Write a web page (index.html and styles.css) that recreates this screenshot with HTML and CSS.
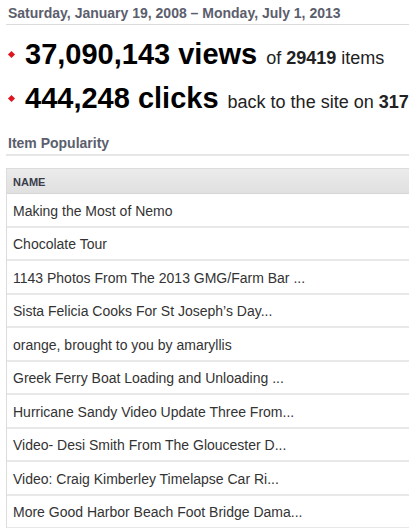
FILE: index.html
```html
<!DOCTYPE html>
<html>
<head>
<meta charset="utf-8">
<link rel="stylesheet" href="styles.css">
</head>
<body>
<div class="page">
  <div class="date">Saturday, January 19, 2008 – Monday, July 1, 2013</div>
  <div class="stats">
    <div class="stat"><span class="bullet"></span><b>37,090,143 views</b> <span class="sub">of <b>29419</b> items</span></div>
    <div class="stat"><span class="bullet"></span><b>444,248 clicks</b> <span class="sub">back to the site on <b>3176</b></span></div>
  </div>
  <div class="section-title">Item Popularity</div>
  <div class="table">
    <div class="thead">NAME</div>
    <div class="row">Making the Most of Nemo</div>
    <div class="row">Chocolate Tour</div>
    <div class="row">1143 Photos From The 2013 GMG/Farm Bar ...</div>
    <div class="row">Sista Felicia Cooks For St Joseph’s Day...</div>
    <div class="row">orange, brought to you by amaryllis</div>
    <div class="row">Greek Ferry Boat Loading and Unloading ...</div>
    <div class="row">Hurricane Sandy Video Update Three From...</div>
    <div class="row">Video- Desi Smith From The Gloucester D...</div>
    <div class="row">Video: Craig Kimberley Timelapse Car Ri...</div>
    <div class="row">More Good Harbor Beach Foot Bridge Dama...</div>
  </div>
</div>
</body>
</html>
```
FILE: styles.css
```css
html, body {
  margin: 0;
  padding: 0;
  overflow: hidden;
  background: #fff;
}
body {
  font-family: "Liberation Sans", Arial, sans-serif;
  color: #333;
}
.page {
  padding-left: 6px;
  width: 403px;
}
.date {
  font-size: 14px;
  font-weight: bold;
  line-height: 17px;
  color: #5b5e6d;
  padding: 5px 0 2px 2px;
  border-bottom: 1px solid #dcdcdc;
}
.stats {
  margin-top: 7px;
}
.stat {
  font-size: 29px;
  line-height: 44px;
  height: 44px;
  white-space: nowrap;
  color: #000;
}
.stat b {
  font-weight: bold;
}
.bullet {
  display: inline-block;
  width: 5px;
  height: 5px;
  background: #e0141e;
  transform: rotate(45deg);
  margin: 0 11px 0 3px;
  vertical-align: 7.5px;
}
.sub {
  font-size: 18px;
  line-height: 1;
  color: #222;
  margin-left: 1px;
}
.section-title {
  margin-top: 15px;
  font-size: 14px;
  font-weight: bold;
  line-height: 17px;
  color: #5b5e6d;
  padding: 0 0 2px 2px;
  border-bottom: 2px solid #e6e6e6;
}
.table {
  margin-top: 12px;
  border-left: 1px solid #dcdcdc;
  border-top: 1px solid #dcdcdc;
}
.thead {
  height: 23px;
  padding-top: 1px;
  display: flex;
  align-items: center;
  padding-left: 6px;
  font-size: 11px;
  font-weight: bold;
  color: #3a3d4a;
  background: linear-gradient(#ebebeb, #e0e0e0);
  border-bottom: 1px solid #d6d6d6;
}
.row {
  height: 29.5px;
  padding-top: 2px;
  display: flex;
  align-items: center;
  padding-left: 6px;
  font-size: 14px;
  color: #333;
  border-bottom: 2px solid #e8e8e8;
  white-space: nowrap;
}
```
